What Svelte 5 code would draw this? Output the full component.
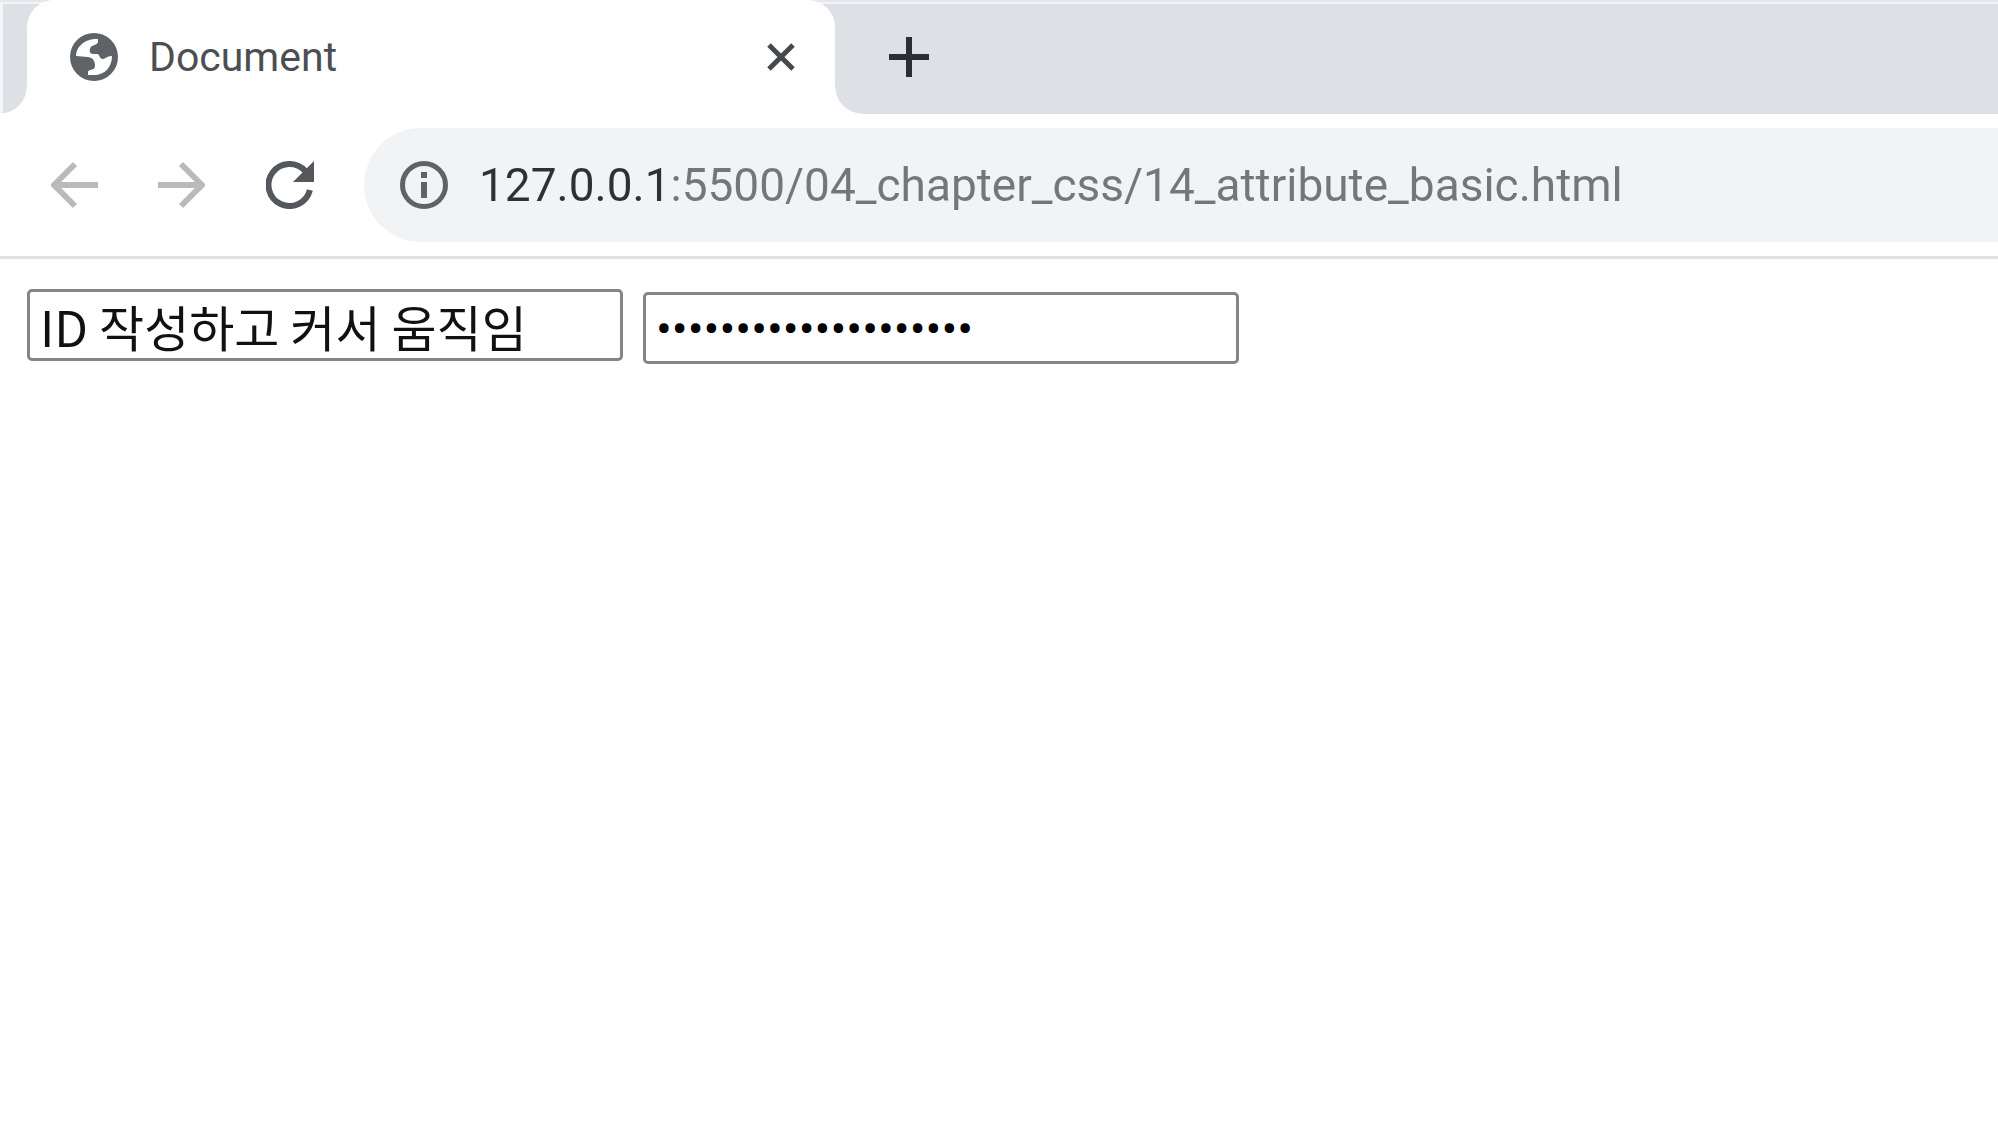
<script lang="ts">
	let title = $state('Document');
	let address = $state('127.0.0.1:5500/04_chapter_css/14_attribute_basic.html');
	let userId = $state('ID 작성하고 커서 움직임');
	let password = $state('abcdefghij0123456789');
</script>

<div class="browser">
	<header class="tab-strip">
		<div class="tab">
			<svg class="tab__favicon" viewBox="0 0 48 48" aria-hidden="true">
				<circle cx="24" cy="24" r="24" fill="#5f6368" />
				<path
					d="M6 23C6 15 13 7 24 6H28V9C27 13 21 11 20 16C19 20 21 21 24 21H27C30 21 29 26 33 26C36 26 36 23 42 23C42 34 35 42 24 42H18V39C18 36 25 38 25 33C25 29 24 25 18 24Z"
					fill="#fff"
				/>
			</svg>
			<span class="tab__title">{title}</span>
			<button class="tab__close" aria-label="Close tab">
				<svg viewBox="0 0 28 28" aria-hidden="true">
					<path d="M2 2L26 26M26 2L2 26" stroke="#45494d" stroke-width="5" />
				</svg>
			</button>
		</div>
		<div class="tab-strip__rest">
			<button class="tab-strip__new" aria-label="New tab">
				<svg viewBox="0 0 40 40" aria-hidden="true">
					<path d="M20 0V40M0 20H40" stroke="#2b2f33" stroke-width="6" />
				</svg>
			</button>
		</div>
	</header>

	<nav class="toolbar">
		<button class="toolbar__button" aria-label="Back">
			<svg viewBox="0 0 48 48" aria-hidden="true">
				<path
					d="M48 24H4M25 3L4 24L25 45"
					fill="none"
					stroke="#b8babc"
					stroke-width="6"
					stroke-linejoin="round"
				/>
			</svg>
		</button>
		<button class="toolbar__button" aria-label="Forward">
			<svg viewBox="0 0 48 48" aria-hidden="true">
				<path
					d="M0 24H44M23 3L44 24L23 45"
					fill="none"
					stroke="#b8babc"
					stroke-width="6"
					stroke-linejoin="round"
				/>
			</svg>
		</button>
		<button class="toolbar__button" aria-label="Reload">
			<svg viewBox="0 0 48 48" aria-hidden="true">
				<path
					d="M43.900 29A21 21 0 1 1 39 9.800"
					fill="none"
					stroke="#54585d"
					stroke-width="6"
				/>
				<path d="M48 0V21H27Z" fill="#54585d" />
			</svg>
		</button>
		<div class="omnibox">
			<svg class="omnibox__info" viewBox="0 0 48 48" aria-hidden="true">
				<circle cx="24" cy="24" r="21.500" fill="none" stroke="#5f6368" stroke-width="5" />
				<path d="M24 11V17M24 21V37" stroke="#5f6368" stroke-width="6" />
			</svg>
			<input class="omnibox__input" aria-label="Address" spellcheck="false" bind:value={address} />
		</div>
	</nav>

	<main class="page">
		<input class="field" type="text" aria-label="ID" spellcheck="false" bind:value={userId} />
		<input
			class="field field--password"
			type="password"
			aria-label="Password"
			bind:value={password}
		/>
	</main>
</div>

<style>
	:global(body) {
		margin: 0;
		background: #fff;
		overflow-x: hidden;
	}

	.browser {
		font-family: Roboto, 'Noto Sans CJK KR', sans-serif;
		overflow: hidden;
	}

	.browser button {
		display: flex;
		align-items: center;
		justify-content: center;
		padding: 0;
		border: 0;
		background: none;
	}

	.tab-strip {
		display: flex;
		height: 114px;
		padding-left: 27px;
		background: linear-gradient(#e4e7eb 2px, #f3f5f7 2px 4px, transparent 4px),
			linear-gradient(90deg, #f3f5f7 3px, #dde1e6 3px);
	}

	/* Curved foot on the outer side of the active tab */
	.tab {
		position: relative;
		box-sizing: border-box;
		display: flex;
		align-items: center;
		width: 808px;
		padding: 0 40px 0 43px;
		border-radius: 27px 27px 0 0;
		background: #fff;
	}

	.tab::before,
	.tab::after {
		content: '';
		position: absolute;
		bottom: 0;
		width: 27px;
		height: 27px;
	}

	.tab::before {
		right: 100%;
		background: radial-gradient(circle at 0 0, transparent 26px, #fff 27px);
	}

	.tab::after {
		left: 100%;
		background: radial-gradient(circle at 100% 0, transparent 26px, #fff 27px);
	}

	.tab__favicon {
		width: 48px;
		height: 48px;
	}

	.tab__title {
		flex: 1;
		margin-left: 31px;
		font-size: 41px;
		line-height: 48px;
		color: #4b4f54;
	}

	.tab__close svg {
		width: 28px;
		height: 28px;
	}

	.tab-strip__rest {
		display: flex;
		align-items: center;
		padding-left: 54px;
	}

	.tab-strip__new svg {
		width: 40px;
		height: 40px;
	}

	.toolbar {
		display: flex;
		align-items: center;
		padding: 14px 0 14px 50px;
		border-bottom: 3px solid #dfe0e1;
	}

	.toolbar__button {
		margin-right: 60px;
	}

	.toolbar__button svg {
		width: 48px;
		height: 48px;
	}

	.omnibox {
		flex: 1;
		display: flex;
		align-items: center;
		height: 114px;
		margin-left: -10px;
		padding-left: 36px;
		border-radius: 57px 0 0 57px;
		background: #f1f3f4;
	}

	.omnibox__info {
		width: 48px;
		height: 48px;
	}

	/* The host part is darker than the rest of the address */
	.omnibox__input {
		flex: 1;
		margin-left: 31px;
		padding: 0;
		border: 0;
		outline: 0;
		font: inherit;
		font-size: 46px;
		line-height: 56px;
		color: transparent;
		background: linear-gradient(90deg, #2d3034 191px, #73777b 191px);
		background-clip: text;
	}

	.page {
		display: flex;
		align-items: flex-start;
		gap: 20px;
		padding: 30px 27px;
	}

	.field {
		box-sizing: border-box;
		width: 596px;
		height: 72px;
		padding: 0 10px;
		border: 3px solid #858585;
		border-radius: 5px;
		outline: 0;
		font-family: 'Noto Sans CJK KR', sans-serif;
		font-size: 49px;
		line-height: 60px;
		color: #111;
	}

	.field--password {
		margin-top: 3px;
		font-family: Roboto, sans-serif;
		font-size: 47px;
		color: #000;
	}
</style>
